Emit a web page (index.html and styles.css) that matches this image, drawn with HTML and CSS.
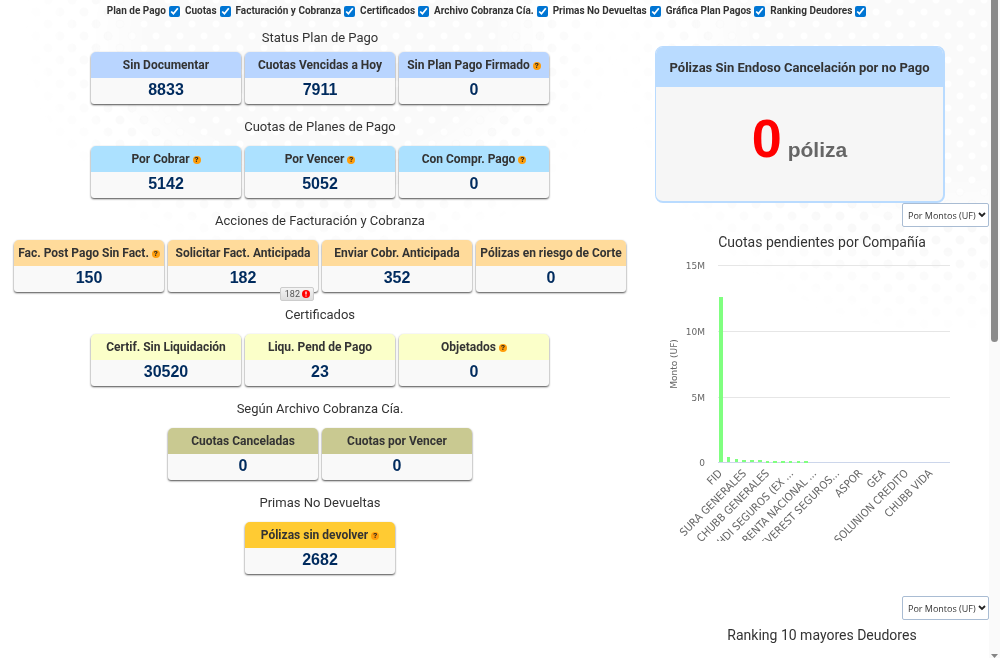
FILE: index.html
```
<!DOCTYPE html>
<html lang="es">
<head>
    <meta charset="UTF-8">
    <meta name="viewport" content="width=device-width, initial-scale=1.0">
    <title>Cobranza</title>
    <link rel="stylesheet" href="styles.css">
</head>
<body>
    <div class="halftone"></div>

    <div class="page">
        <form class="filters">
            <label>Plan de Pago <input type="checkbox" checked></label>
            <label>Cuotas <input type="checkbox" checked></label>
            <label>Facturación y Cobranza <input type="checkbox" checked></label>
            <label>Certificados <input type="checkbox" checked></label>
            <label>Archivo Cobranza Cía. <input type="checkbox" checked></label>
            <label>Primas No Devueltas <input type="checkbox" checked></label>
            <label>Gráfica Plan Pagos <input type="checkbox" checked></label>
            <label>Ranking Deudores <input type="checkbox" checked></label>
        </form>

        <div class="columns">
            <main class="status">
                <section class="group blue">
                    <h2>Status Plan de Pago</h2>
                    <div class="cards">
                        <div class="card"><h3>Sin Documentar</h3><p>8833</p></div>
                        <div class="card"><h3>Cuotas Vencidas a Hoy</h3><p>7911</p></div>
                        <div class="card"><h3>Sin Plan Pago Firmado <span class="help">?</span></h3><p>0</p></div>
                    </div>
                </section>
                <section class="group sky">
                    <h2>Cuotas de Planes de Pago</h2>
                    <div class="cards">
                        <div class="card"><h3>Por Cobrar <span class="help">?</span></h3><p>5142</p></div>
                        <div class="card"><h3>Por Vencer <span class="help">?</span></h3><p>5052</p></div>
                        <div class="card"><h3>Con Compr. Pago <span class="help">?</span></h3><p>0</p></div>
                    </div>
                </section>
                <section class="group orange">
                    <h2>Acciones de Facturación y Cobranza</h2>
                    <div class="cards">
                        <div class="card"><h3>Fac. Post Pago Sin Fact. <span class="help">?</span></h3><p>150</p></div>
                        <div class="card">
                            <h3>Solicitar Fact. Anticipada</h3><p>182</p>
                            <span class="alert">182
                                <svg width="8" height="8" viewBox="0 0 8 8"><circle cx="4" cy="4" r="4" fill="#f00"/><path d="M4 1.4v3M4 5.4v1.2" stroke="#fff" stroke-width="1.3"/></svg>
                            </span>
                        </div>
                        <div class="card"><h3>Enviar Cobr. Anticipada</h3><p>352</p></div>
                        <div class="card"><h3>Pólizas en riesgo de Corte</h3><p>0</p></div>
                    </div>
                </section>
                <section class="group yellow">
                    <h2>Certificados</h2>
                    <div class="cards">
                        <div class="card"><h3>Certif. Sin Liquidación</h3><p>30520</p></div>
                        <div class="card"><h3>Liqu. Pend de Pago</h3><p>23</p></div>
                        <div class="card"><h3>Objetados <span class="help">?</span></h3><p>0</p></div>
                    </div>
                </section>
                <section class="group olive">
                    <h2>Según Archivo Cobranza Cía.</h2>
                    <div class="cards">
                        <div class="card"><h3>Cuotas Canceladas</h3><p>0</p></div>
                        <div class="card"><h3>Cuotas por Vencer</h3><p>0</p></div>
                    </div>
                </section>
                <section class="group gold">
                    <h2>Primas No Devueltas</h2>
                    <div class="cards">
                        <div class="card"><h3>Pólizas sin devolver <span class="help">?</span></h3><p>2682</p></div>
                    </div>
                </section>
            </main>

            <aside class="charts">
                <div class="policy">
                    <h3>Pólizas Sin Endoso Cancelación por no Pago</h3>
                    <p><strong>0</strong> póliza</p>
                </div>

                <section class="panel pending">
                    <select aria-label="Cuotas pendientes por"><option>Por Montos (UF)</option></select>
                    <h2>Cuotas pendientes por Compañía</h2>
                    <svg class="chart" width="334" height="287" viewBox="0 0 334 287">
                        <path class="grid" d="M63 11.5H295M63 77.5H295M63 143.5H295"/>
                        <path class="axis" d="M63 208.5H295"/>
                        <g class="ticks">
                            <text x="50" y="15">15M</text>
                            <text x="50" y="81">10M</text>
                            <text x="50" y="147">5M</text>
                            <text x="50" y="212">0</text>
                        </g>
                        <text class="ylabel" transform="translate(22 110) rotate(-90)">Monto (UF)</text>
                        <g class="bars">
                            <rect x="64" y="43" width="4" height="165"/>
                            <rect x="72" y="203" width="3" height="5"/>
                            <rect x="80" y="205" width="3" height="3"/>
                            <rect x="87" y="206" width="4" height="2"/>
                            <rect x="95" y="206" width="4" height="2"/>
                            <rect x="103" y="206" width="4" height="2"/>
                            <rect x="111" y="207" width="3" height="2"/>
                            <rect x="118" y="207" width="4" height="2"/>
                            <rect x="126" y="207" width="4" height="2"/>
                            <rect x="134" y="207" width="3" height="2"/>
                            <rect x="142" y="207" width="3" height="2"/>
                            <rect x="149" y="207" width="4" height="2"/>
                        </g>
                        <g class="names">
                            <text transform="translate(68 220) rotate(-45)">FID</text>
                            <text transform="translate(92 220) rotate(-45)">SURA GENERALES</text>
                            <text transform="translate(115 220) rotate(-45)">CHUBB GENERALES</text>
                            <text transform="translate(139 220) rotate(-45)">HDI SEGUROS (EX ...</text>
                            <text transform="translate(162 220) rotate(-45)">RENTA NACIONAL ...</text>
                            <text transform="translate(185 220) rotate(-45)">EVEREST SEGUROS...</text>
                            <text transform="translate(208 220) rotate(-45)">ASPOR</text>
                            <text transform="translate(231 220) rotate(-45)">GEA</text>
                            <text transform="translate(254 220) rotate(-45)">SOLUNION CREDITO</text>
                            <text transform="translate(278 220) rotate(-45)">CHUBB VIDA</text>
                        </g>
                    </svg>
                </section>

                <section class="panel">
                    <select aria-label="Ranking por"><option>Por Montos (UF)</option></select>
                    <h2>Ranking 10 mayores Deudores</h2>
                </section>
            </aside>
        </div>
    </div>

    <div class="scrollbar"><div class="thumb"></div><div class="arrow"></div></div>
</body>
</html>
```
FILE: styles.css
```
* {
    box-sizing: border-box;
}
body {
    margin: 0;
    background: #fff;
    color: #333;
    font-family: Roboto, "Liberation Sans", sans-serif;
}
h2, h3, p {
    margin: 0;
}

/* dotted backdrop: white dots on a grey core, grey dots round it */
.halftone::before, .halftone::after {
    content: '';
    position: fixed;
    inset: 0;
    z-index: -1;
}
.halftone::before {
    background:
        radial-gradient(circle, #f9f9f9 4px, transparent 5px) 0 0 / 24px 24px,
        radial-gradient(circle, #f9f9f9 4px, transparent 5px) 12px 12px / 24px 24px;
    mask-image:
        radial-gradient(ellipse 300px 240px at 32% 5%, #000 70%, transparent),
        radial-gradient(ellipse 340px 320px at 95% 3%, #000 70%, transparent);
}
.halftone::after {
    background:
        radial-gradient(circle, #fff 3px, transparent 4px) 0 0 / 24px 24px,
        radial-gradient(circle, #fff 3px, transparent 4px) 12px 12px / 24px 24px,
        #fafafa;
    mask-image:
        radial-gradient(ellipse 230px 170px at 32% 5%, #000 75%, transparent),
        radial-gradient(ellipse 260px 210px at 95% 3%, #000 75%, transparent);
}
.page {
    padding-right: 11px;
}

/* filters */
.filters {
    display: flex;
    justify-content: center;
    gap: 5px;
    height: 26px;
    padding: 4px 16px 0 0;
    font-size: 10px;
    font-weight: 700;
    line-height: 14px;
}
.filters label {
    display: flex;
    align-items: center;
    gap: 3px;
    height: 14px;
    white-space: nowrap;
}
.filters input {
    width: 11px;
    height: 11px;
    margin: 0;
    accent-color: #0075d3;
}

.columns {
    display: flex;
}
.status {
    flex: 1;
    padding-right: 15px;
}
.charts {
    flex: 0 0 334px;
}

/* status cards */
h2 {
    font-size: 13px;
    font-weight: 400;
    line-height: 24px;
    text-align: center;
}
.group {
    padding-top: 11px;
}
.group:first-child {
    padding-top: 0;
}
.group h2 {
    margin-bottom: 7px;
}
.group:first-child h2 {
    margin-bottom: 2px;
}
.cards {
    display: flex;
    justify-content: center;
    gap: 4px;
}
.card {
    position: relative;
    width: 150px;
    height: 52px;
    border-radius: 5px 5px 3px 3px;
    background: #f9f9f9;
    box-shadow: 0 1px 2px rgba(0, 0, 0, 0.7);
    text-align: center;
}
.card h3 {
    height: 26px;
    border-radius: 5px 5px 0 0;
    font-size: 12px;
    font-weight: 700;
    line-height: 26px;
    white-space: nowrap;
}
.card p {
    color: #002b5e;
    font: bold 16px/24px "Liberation Sans", Arial, sans-serif;
}
.blue h3 { background: #b9d5ff; }
.sky h3 { background: #ace1ff; }
.orange h3 { background: #ffdb9b; }
.yellow h3 { background: #fbffc9; }
.olive h3 { background: #c9c991; }
.gold h3 { background: #ffcb33; }
.help {
    display: inline-block;
    width: 8px;
    height: 8px;
    border-radius: 50%;
    background: #ff9d0a;
    color: #222;
    font-size: 8px;
    line-height: 8px;
    vertical-align: 1px;
}
.alert {
    position: absolute;
    right: 4px;
    bottom: -9px;
    display: flex;
    align-items: center;
    gap: 2px;
    height: 14px;
    padding: 0 3px 0 4px;
    border: 1px solid #ccc;
    border-radius: 2px;
    background: linear-gradient(#f4f4f4, #ddd);
    color: #555;
    font-size: 9px;
}

/* right column */
.policy {
    width: 290px;
    height: 157px;
    margin-top: 20px;
    border: 1px solid #b9dbff;
    border-width: 1px 2px 2px 1px;
    border-radius: 8px;
    background: #f6f6f6;
    overflow: hidden;
    text-align: center;
}
.policy h3 {
    height: 40px;
    background: #b9dbff;
    font-size: 13px;
    line-height: 42px;
}
.policy p {
    padding-top: 21px;
    color: #666;
    font: bold 21px/60px "Liberation Sans", Arial, sans-serif;
}
.policy strong {
    color: #f00;
    font-size: 54px;
}
.panel {
    display: flex;
    flex-direction: column;
}
.pending {
    height: 393px;
}
.panel select {
    align-self: flex-end;
    width: 87px;
    height: 24px;
    padding: 0 0 0 5px;
    appearance: none;
    border: 1px solid #a9bcd3;
    border-radius: 2px;
    background: #fff url("data:image/svg+xml,%3Csvg xmlns='http://www.w3.org/2000/svg' width='8' height='6'%3E%3Cpath d='M1 1l3 3 3-3' fill='none' stroke='%23222' stroke-width='1.8'/%3E%3C/svg%3E") no-repeat right 2px center;
    color: #333;
    font: 9px "Open Sans", sans-serif;
}
.panel h2 {
    margin-top: 3px;
    font-size: 14px;
}
.chart {
    flex: none;
    fill: #666;
    font-family: "DejaVu Sans", sans-serif;
    font-size: 9px;
}
.grid {
    stroke: #e6e6e6;
}
.axis {
    stroke: #ccd6eb;
}
.bars {
    fill: #80ff80;
}
.ticks, .names {
    text-anchor: end;
}
.names {
    font-family: "DejaVu Sans Condensed", "DejaVu Sans", sans-serif;
    font-size: 11px;
}
.ylabel {
    text-anchor: middle;
}

/* scrollbar */
.scrollbar {
    position: fixed;
    top: 0;
    right: 0;
    bottom: 0;
    display: flex;
    flex-direction: column;
    justify-content: space-between;
    width: 11px;
    padding-left: 2px;
    background: #fafafa;
}
.thumb {
    width: 7px;
    height: 52%;
    border-radius: 0 0 4px 4px;
    background: #8b8b8b;
}
.arrow {
    width: 7px;
    height: 4px;
    background: #858585;
    clip-path: polygon(0 0, 100% 0, 50% 100%);
}
```
